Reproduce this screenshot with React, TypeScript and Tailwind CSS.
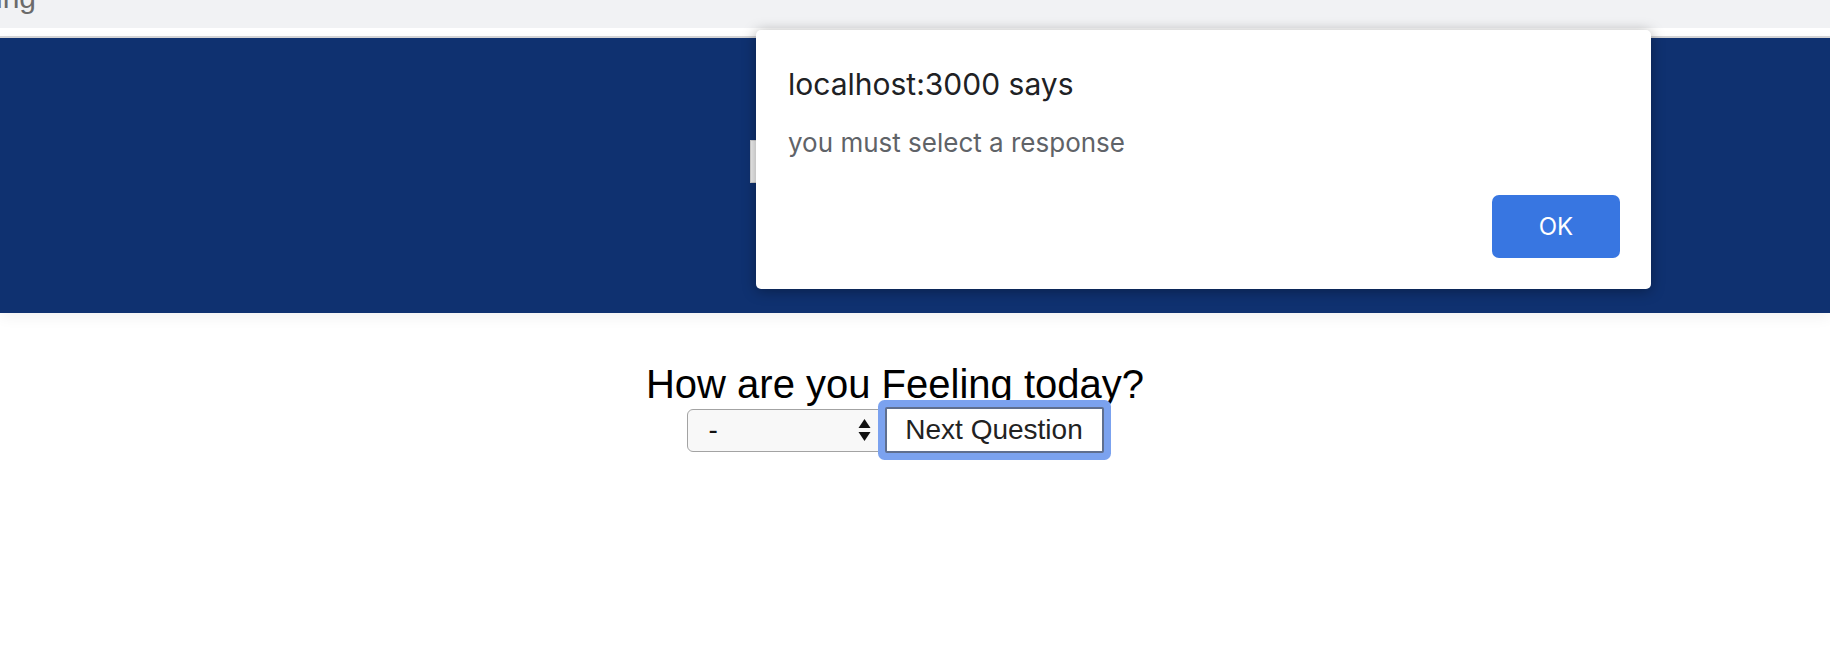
import React from 'react';

const SelectArrows: React.FC = () => (
  <svg width="13" height="24" viewBox="0 0 13 24" className="block">
    <path d="M6.5 1 L12.5 10 L0.5 10 Z" fill="#111" />
    <path d="M6.5 23 L12.5 14 L0.5 14 Z" fill="#111" />
  </svg>
);

const AlertDialog: React.FC = () => (
  <div
    className="absolute left-[756px] top-[30px] w-[895px] h-[259px] bg-white rounded-[5px] shadow-[0_2px_14px_rgba(0,0,0,0.35)] flex flex-col pl-[32px] pr-[31px] pt-[36px] pb-[31px]"
    style={{ fontFamily: 'Inter, "Noto Sans", sans-serif' }}
  >
    <div className="text-[30px] leading-[36px] text-[#202124]">localhost:3000 says</div>
    <div className="mt-[25px] text-[26px] leading-[32px] text-[#5f6368]">you must select a response</div>
    <div className="mt-auto flex justify-end">
      <button className="w-[128px] h-[63px] rounded-[7px] bg-[#3876e1] text-white text-[24px]">OK</button>
    </div>
  </div>
);

export default function App() {
  return (
    <div className="relative w-full h-[656px] bg-white overflow-hidden" style={{ fontFamily: '"Liberation Sans", Arial, sans-serif' }}>
      {/* browser chrome strip */}
      <div className="h-[28px] bg-[#f1f2f4] overflow-hidden">
        <div className="-mt-[17px] -ml-[4px] text-[30px] leading-[30px] text-[#6b6b6b]">ing</div>
      </div>
      <div className="h-[8px] bg-white" />
      <div className="h-[2px] bg-[#d6d6d8]" />

      <header className="h-[275px] bg-[#0f3170] shadow-[0_4px_14px_rgba(0,0,0,0.06)] flex justify-center pr-[40px]">
        <input className="mt-[102px] w-[290px] h-[43px] bg-[#f0f0f0] border border-[#d0d0d0]" />
      </header>

      <main className="flex flex-col items-center pr-[40px] pt-[48px]">
        <h2 className="text-[40px] leading-[46px] text-black">How are you Feeling today?</h2>
        <div className="flex items-center">
          <div className="w-[197px] h-[43px] rounded-[6px] border border-[#a3a3a3] bg-[#f8f8f8] flex items-center justify-between pl-[21px] pr-[12px] text-[28px] text-[#111]">
            <span className="leading-none">-</span>
            <SelectArrows />
          </div>
          <button className="relative w-[219px] h-[46px] ml-[1px] bg-white border-2 border-[#5f6f8f] rounded-[2px] shadow-[0_0_0_7px_#7ba2ef] text-[28px] text-[#222]">
            Next Question
          </button>
        </div>
      </main>

      <AlertDialog />
    </div>
  );
}
